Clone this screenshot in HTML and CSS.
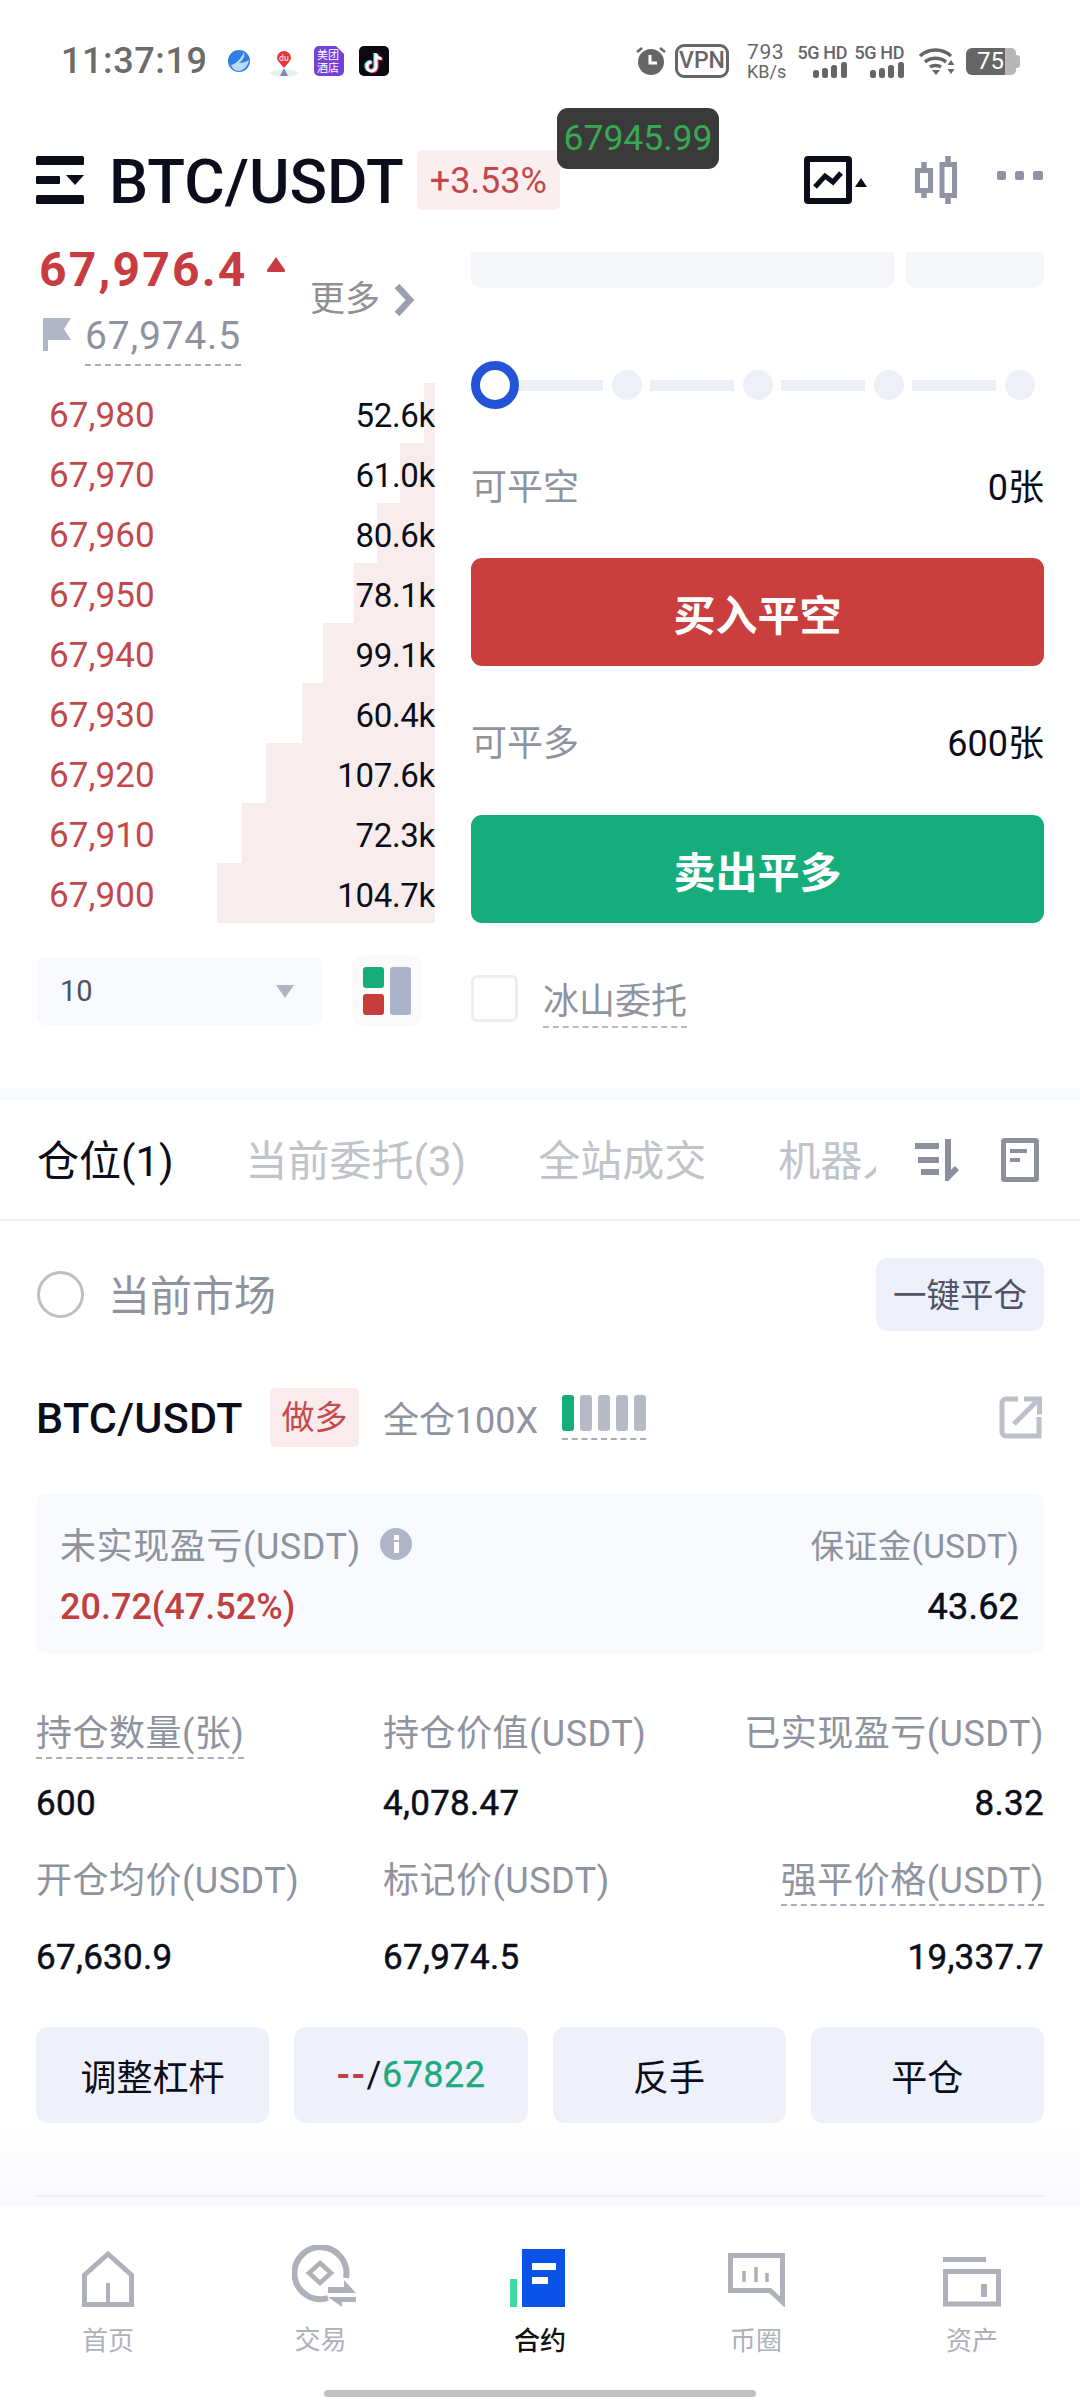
FILE: index.html
```html
<!DOCTYPE html>
<html lang="zh-CN">
<head>
<meta charset="utf-8">
<title>BTC/USDT</title>
<link rel="stylesheet" href="styles.css">
</head>
<body>
<div class="page">
  <div class="status">
    <span class="time">11:37:19</span>
    <svg class="st-globe" width="22" height="22" viewBox="0 0 22 22"><circle cx="11" cy="11" r="11" fill="#2f7fe6"/><path d="M3 15C8 14 13 9 16 2c1 5-1 8-5 11 4 0 7-1 10-3-1 6-5 10-10 11-4 0-7-3-8-6z" fill="#bcdcff"/></svg>
    <svg class="st-map" width="28" height="26" viewBox="0 0 28 26"><ellipse cx="14" cy="22" rx="14" ry="3.5" fill="#e6f2e4"/><path d="M14 17C9 11 7 9 7 7a7 7 0 0 1 14 0c0 2-2 4-7 10z" fill="#e8353b"/><path d="M10 25l4-8 4 8z" fill="#7d88c9"/><text class="svg-text" x="14" y="9.500" font-size="8" fill="#fff" text-anchor="middle">du</text></svg>
    <svg class="st-hotel" width="30" height="30" viewBox="0 0 30 30"><path d="M5 0h17l8 8v17a5 5 0 0 1-5 5H5a5 5 0 0 1-5-5V5a5 5 0 0 1 5-5z" fill="#7440d8"/><text class="svg-text" x="14" y="13" font-size="11" fill="#fff" text-anchor="middle">美团</text><text class="svg-text" x="14" y="26" font-size="11" fill="#fff" text-anchor="middle">酒店</text></svg>
    <svg class="st-tiktok" width="30" height="30" viewBox="0 0 30 30"><rect width="30" height="30" rx="5" fill="#0a0a10"/><path d="M16 7v13a4.500 4.500 0 1 1-4.500-4.500M16 7c0 3 2.500 5 5.500 5" fill="none" stroke="#45e0e6" stroke-width="3.400"/><path d="M18 8v13a4.500 4.500 0 1 1-4.500-4.500M18 8c0 3 2.500 5 5.500 5" fill="none" stroke="#f2386a" stroke-width="3.400"/><path d="M17 7.500v13a4.500 4.500 0 1 1-4.500-4.500M17 7.500c0 3 2.500 5 5.500 5" fill="none" stroke="#fff" stroke-width="3"/></svg>
    <svg class="st-alarm" width="30" height="28" viewBox="0 0 30 28"><circle cx="15" cy="15" r="13" fill="#666"/><path d="M14 8v8h7" fill="none" stroke="#fff" stroke-width="3"/><path d="M1 5l5-4M29 5l-5-4" stroke="#666" stroke-width="2.500"/></svg>
    <span class="st-vpn">VPN</span>
    <span class="st-speed"><b>793</b><i>KB/s</i></span>
    <span class="st-sig">
      <span class="sig-label">5G HD</span>
      <svg width="34" height="16" viewBox="0 0 34 16"><rect x="0" y="8" width="6" height="8" rx="2.500"/><rect x="9" y="6" width="6" height="10" rx="2.500"/><rect x="18" y="3" width="6" height="13" rx="2.500"/><rect x="28" y="0" width="6" height="16" rx="2.500"/></svg>
    </span>
    <span class="st-sig st-sig-b">
      <span class="sig-label">5G HD</span>
      <svg width="34" height="16" viewBox="0 0 34 16"><rect x="0" y="8" width="6" height="8" rx="2.500"/><rect x="9" y="6" width="6" height="10" rx="2.500"/><rect x="18" y="3" width="6" height="13" rx="2.500"/><rect x="28" y="0" width="6" height="16" rx="2.500"/></svg>
    </span>
    <svg class="st-wifi" width="37" height="28" viewBox="0 0 37 28"><path d="M2 9c9-8 22-8 31 0M7 15c6-5 15-5 21 0M12 20c3-2 8-2 11 0" fill="none" stroke="#666" stroke-width="3.600"/><path d="M14 23h8l-4 5z" fill="#666"/><path d="M33 13l3.500 5h-7zM33 27l3.500-5h-7z" fill="#666"/></svg>
    <span class="st-batt"><span class="batt-fill">75</span><span class="batt-rest"></span><span class="batt-nub"></span></span>
  </div>

  <div class="tooltip">67945.99</div>

  <header class="head">
    <svg class="menu-icon" width="48" height="48" viewBox="0 0 48 48"><rect width="48" height="9" rx="1.500"/><rect y="20" width="24" height="8" rx="1"/><path d="M30 19h18l-9 10z"/><rect y="39" width="48" height="9" rx="1.500"/></svg>
    <h1 class="title">BTC/USDT</h1>
    <span class="change">+3.53%</span>
    <svg class="chart-icon" width="69" height="48" viewBox="0 0 69 48"><rect x="3" y="3" width="42" height="42" rx="1" fill="none" stroke="#0b0e1a" stroke-width="6"/><path d="M11 31l10-11 8 6 8-9" fill="none" stroke="#0b0e1a" stroke-width="5"/><path d="M57 22l6 9H51z" fill="#0b0e1a"/></svg>
    <svg class="candle-icon" width="42" height="48" viewBox="0 0 42 48"><path d="M9 6v36M33 0v48" stroke="#8f94a3" stroke-width="5.500"/><rect x="2.500" y="14.500" width="13" height="20" fill="#fff" stroke="#8f94a3" stroke-width="5"/><rect x="27" y="8.500" width="12.500" height="31" fill="#fff" stroke="#8f94a3" stroke-width="5"/></svg>
    <svg class="dots-icon" width="46" height="9" viewBox="0 0 46 9"><rect width="9" height="9" rx="2"/><rect x="18" width="9" height="9" rx="2"/><rect x="36" width="10" height="9" rx="2"/></svg>
  </header>

  <section class="trade">
    <div class="left">
      <div class="ticker">
        <div class="ticker-main">
          <div class="last">
            <span class="last-price">67,976.4</span>
            <svg class="last-arrow" width="18" height="15" viewBox="0 0 18 15"><path d="M9 0l9 13a1.500 1.500 0 0 1-1 2H1a1.500 1.500 0 0 1-1-2z"/></svg>
          </div>
          <div class="mark">
            <svg class="flag" width="28" height="33" viewBox="0 0 28 33"><path d="M0 0h28l-7 11 7 11H5v11H0z"/></svg>
            <span class="mark-price">67,974.5</span>
          </div>
        </div>
        <div class="more">
          <span>更多</span>
          <svg width="20" height="32" viewBox="0 0 20 32"><path d="M3 2l13 14L3 30" fill="none" stroke="#9aa0ad" stroke-width="6.500"/></svg>
        </div>
      </div>
      <div class="book">
        <div class="row"><span class="bar" style="width:11px"></span><span class="px">67,980</span><span class="qty">52.6k</span></div>
        <div class="row"><span class="bar" style="width:35px"></span><span class="px">67,970</span><span class="qty">61.0k</span></div>
        <div class="row"><span class="bar" style="width:58px"></span><span class="px">67,960</span><span class="qty">80.6k</span></div>
        <div class="row"><span class="bar" style="width:81px"></span><span class="px">67,950</span><span class="qty">78.1k</span></div>
        <div class="row"><span class="bar" style="width:112px"></span><span class="px">67,940</span><span class="qty">99.1k</span></div>
        <div class="row"><span class="bar" style="width:133px"></span><span class="px">67,930</span><span class="qty">60.4k</span></div>
        <div class="row"><span class="bar" style="width:169px"></span><span class="px">67,920</span><span class="qty">107.6k</span></div>
        <div class="row"><span class="bar" style="width:193px"></span><span class="px">67,910</span><span class="qty">72.3k</span></div>
        <div class="row"><span class="bar" style="width:218px"></span><span class="px">67,900</span><span class="qty">104.7k</span></div>
      </div>
      <div class="depth-row">
        <div class="select"><span>10</span><svg width="18" height="13" viewBox="0 0 18 13"><path d="M0 0h18l-9 13z"/></svg></div>
        <div class="layout-btn">
          <svg width="48" height="48" viewBox="0 0 48 48"><rect width="21" height="21" rx="3" fill="#16ad7a"/><rect y="27" width="21" height="21" rx="3" fill="#c93c3c"/><rect x="27" width="21" height="48" rx="3" fill="#aab3c9"/></svg>
        </div>
      </div>
    </div>

    <div class="right">
      <div class="inputs"><span class="input-a"></span><span class="input-b"></span></div>
      <div class="slider">
        <span class="thumb"></span>
        <span class="track"></span><span class="dot"></span>
        <span class="track"></span><span class="dot"></span>
        <span class="track"></span><span class="dot"></span>
        <span class="track"></span><span class="dot"></span>
      </div>
      <div class="avail avail-a"><span class="avail-label">可平空</span><span class="avail-val">0张</span></div>
      <button class="cta cta-buy">买入平空</button>
      <div class="avail avail-b"><span class="avail-label">可平多</span><span class="avail-val">600张</span></div>
      <button class="cta cta-sell">卖出平多</button>
      <div class="iceberg"><span class="check"></span><span class="iceberg-label">冰山委托</span></div>
    </div>
  </section>

  <div class="band"></div>

  <nav class="tabs">
    <div class="tab-list">
      <span class="tab tab-on">仓位(1)</span>
      <span class="tab">当前委托(3)</span>
      <span class="tab">全站成交</span>
      <span class="tab">机器人</span>
    </div>
    <svg class="sort-icon" width="45" height="42" viewBox="0 0 45 42"><rect y="4" width="24" height="6"/><rect x="3" y="18" width="21" height="6"/><rect x="6" y="30" width="18" height="6"/><path d="M33 0v38l9-9" fill="none" stroke="#8c909c" stroke-width="6"/></svg>
    <svg class="note-icon" width="38" height="44" viewBox="0 0 38 44"><rect x="2.500" y="2.500" width="33" height="39" rx="1" fill="none" stroke="#8c909c" stroke-width="5"/><rect x="9" y="11" width="17" height="4" fill="#8c909c"/><rect x="9" y="20" width="10" height="4" fill="#8c909c"/></svg>
  </nav>

  <main class="position">
    <div class="market">
      <span class="market-left"><span class="radio"></span><span class="market-label">当前市场</span></span>
      <span class="close-all">一键平仓</span>
    </div>

    <div class="pos-head">
      <span class="pos-name">BTC/USDT</span>
      <span class="pos-side">做多</span>
      <span class="pos-mode">全仓100X</span>
      <span class="risk"><i class="risk-on"></i><i></i><i></i><i></i><i></i></span>
      <svg class="share" width="43" height="43" viewBox="0 0 43 43"><path d="M19 3H7a4 4 0 0 0-4 4v29a4 4 0 0 0 4 4h33V21" fill="none" stroke="#bcc0ca" stroke-width="5"/><path d="M15 28L38 5M25 3h15.500v15.500" fill="none" stroke="#bcc0ca" stroke-width="5"/></svg>
    </div>

    <div class="pnl">
      <div class="pnl-col">
        <div class="pnl-label">未实现盈亏(USDT)<svg class="info" width="32" height="32" viewBox="0 0 32 32"><circle cx="16" cy="16" r="16" fill="#b0b6c8"/><rect x="14" y="14" width="5" height="11" fill="#fff"/><rect x="14" y="7" width="5" height="5" fill="#fff"/></svg></div>
        <div class="pnl-val pnl-red">20.72(47.52%)</div>
      </div>
      <div class="pnl-col pnl-end">
        <div class="pnl-label">保证金(USDT)</div>
        <div class="pnl-val">43.62</div>
      </div>
    </div>

    <div class="stats">
      <div class="stat"><span class="stat-label dashed">持仓数量(张)</span><span class="stat-val">600</span></div>
      <div class="stat"><span class="stat-label">持仓价值(USDT)</span><span class="stat-val">4,078.47</span></div>
      <div class="stat stat-end"><span class="stat-label">已实现盈亏(USDT)</span><span class="stat-val">8.32</span></div>
    </div>
    <div class="stats stats-b">
      <div class="stat"><span class="stat-label">开仓均价(USDT)</span><span class="stat-val">67,630.9</span></div>
      <div class="stat"><span class="stat-label">标记价(USDT)</span><span class="stat-val">67,974.5</span></div>
      <div class="stat stat-end"><span class="stat-label dashed">强平价格(USDT)</span><span class="stat-val">19,337.7</span></div>
    </div>

    <div class="actions">
      <button class="act">调整杠杆</button>
      <button class="act act-tp"><span class="act-red">--</span>/<span class="act-green">67822</span></button>
      <button class="act">反手</button>
      <button class="act">平仓</button>
    </div>
  </main>

  <div class="fade"><div class="fade-line"></div></div>

  <footer class="nav">
    <div class="nav-items">
      <div class="nav-item">
        <svg width="52" height="57" viewBox="0 0 52 57" fill="none" stroke="#aeb1ba" stroke-width="5"><path d="M2.500 54.500V25L26 4l23.500 21v29.500z"/><path d="M26 33v21" stroke-width="4"/></svg>
        <span class="nav-label">首页</span>
      </div>
      <div class="nav-item">
        <svg width="64" height="62" viewBox="0 0 64 62" fill="none" stroke="#aeb1ba"><path d="M54 33A26 26 0 1 0 36 53" stroke-width="6"/><path d="M28 18l11 10-11 10-11-10z" stroke-width="4.500"/><path d="M36 48V42H52V35L64 48z" fill="#aeb1ba" stroke="none"/><path d="M64 52v5H50v5L36 52z" fill="#aeb1ba" stroke="none"/></svg>
        <span class="nav-label nav-label-shift">交易</span>
      </div>
      <div class="nav-item">
        <svg class="contract-icon" width="55" height="58" viewBox="0 0 55 58"><rect x="0" y="30" width="7" height="28" fill="#3ddc9e"/><rect x="12" width="43" height="58" fill="#0a52e8"/><rect x="22" y="14" width="24" height="7" fill="#fff"/><rect x="22" y="28" width="16" height="7" fill="#fff"/></svg>
        <span class="nav-label nav-label-on">合约</span>
      </div>
      <div class="nav-item">
        <svg width="57" height="54" viewBox="0 0 57 54" fill="none" stroke="#aeb1ba"><path d="M2.500 2.500h52V49L42 37.500H2.500z" stroke-width="5"/><path d="M16 18v11M28 14v15M39 20v9" stroke-width="3.500"/></svg>
        <span class="nav-label">币圈</span>
      </div>
      <div class="nav-item">
        <svg width="58" height="50" viewBox="0 0 58 50" fill="none" stroke="#aeb1ba"><path d="M0 2.500h43" stroke-width="5"/><path d="M2.500 14.500h53v32.500h-53z" stroke-width="5"/><path d="M41 27v13" stroke-width="6"/></svg>
        <span class="nav-label">资产</span>
      </div>
    </div>
    <div class="home-bar"></div>
  </footer>
</div>
</body>
</html>
```

FILE: styles.css
```css
* { box-sizing: border-box; margin: 0; padding: 0; }
html, body { background: #fff; }
body {
  width: 1080px;
  height: 2400px;
  overflow: hidden;
  font-family: Roboto, "Noto Sans CJK SC", sans-serif;
  color: #0b0e1a;
}
button { font-family: inherit; border: 0; cursor: pointer; }
svg { display: block; flex: none; }
.svg-text { font-family: "Noto Sans CJK SC", Roboto, sans-serif; }
.page { position: relative; width: 1080px; height: 2400px; }

/* status bar */
.status { height: 100px; padding: 43px 60px 21px 61px; display: flex; align-items: center; color: #666; }
.time { font-size: 36px; font-weight: 500; letter-spacing: .6px; line-height: 36px; color: #6b6b6b; }
.st-globe { margin-left: 20px; }
.st-map { margin-left: 20px; margin-top: 5px; }
.st-hotel { margin-left: 16px; }
.st-tiktok { margin-left: 15px; }
.st-alarm { margin-left: auto; }
.st-vpn { margin-left: 9px; width: 54px; height: 34px; border: 3px solid #666; border-radius: 9px; font-size: 23px; font-weight: 500; line-height: 28px; text-align: center; }
.st-speed { margin-left: 18px; width: 37px; display: flex; flex-direction: column; align-items: flex-start; }
.st-speed b { font-size: 21px; font-weight: 400; line-height: 18px; letter-spacing: .6px; }
.st-speed i { font-size: 18px; font-style: normal; line-height: 17px; margin-top: 2px; }
.st-sig { margin-left: 15px; width: 48px; display: flex; flex-direction: column; align-items: flex-end; fill: #666; }
.st-sig-b { margin-left: 9px; }
.sig-label { font-size: 18px; font-weight: 500; line-height: 17px; letter-spacing: -.4px; white-space: nowrap; margin-bottom: 1px; }
.st-wifi { margin-left: 14px; }
.st-batt { margin-left: 11px; width: 54px; height: 27px; display: flex; }
.batt-fill { width: 39px; background: #666; border-radius: 6px 0 0 6px; color: #fff; font-size: 24px; line-height: 27px; text-align: right; padding-right: 1px; }
.batt-rest { width: 11px; background: #b6b6b6; border-radius: 0 5px 5px 0; }
.batt-nub { width: 4px; height: 13px; align-self: center; background: #b6b6b6; border-radius: 0 3px 3px 0; }

/* floating price */
.tooltip { position: absolute; left: 557px; top: 108px; width: 162px; height: 61px; background: #3a3a3a; border-radius: 11px; color: #39a854; font-size: 35.500px; line-height: 61px; text-align: center; z-index: 3; }

/* header */
.head { height: 152px; padding: 50px 37px 0 36px; display: flex; align-items: flex-start; }
.menu-icon { margin-top: 6px; fill: #0b0e1a; }
.title { margin: 2px 0 0 25px; font-size: 62px; font-weight: 500; line-height: 60px; white-space: nowrap; }
.change { margin-left: 13px; width: 143px; height: 60px; background: #fbeeee; border-radius: 5px; color: #c4474c; font-size: 36px; line-height: 62px; text-align: center; }
.chart-icon { margin-left: auto; margin-top: 6px; }
.candle-icon { margin-left: 42px; margin-top: 6px; }
.dots-icon { margin-left: 40px; margin-top: 21px; fill: #8f94a3; }

/* trade panel */
.trade { height: 836px; padding: 0 36px; display: flex; gap: 36px; overflow: hidden; }
.left { width: 399px; flex: none; }
.right { flex: 1; min-width: 0; }

.ticker { height: 131px; display: flex; }
.ticker-main { width: 274px; flex: none; }
.last { display: flex; align-items: flex-start; margin: -6px 0 0 3px; }
.last-price { font-size: 48px; font-weight: 700; line-height: 48px; letter-spacing: 2.200px; color: #c73c40; }
.last-arrow { margin: 11px 0 0 19px; fill: #c73c40; }
.mark { display: flex; align-items: flex-start; margin: 21px 0 0 7px; }
.flag { margin-top: 3px; fill: #b0b6c5; }
.mark-price { margin-left: 14px; margin-top: 1px; padding-bottom: 8px; border-bottom: 2px dashed #a9adb7; font-size: 39px; line-height: 40px; letter-spacing: .8px; color: #8e939f; }
.more { height: 40px; margin-top: 28px; display: flex; align-items: center; gap: 14px; font-size: 35px; line-height: 40px; color: #8f8f94; }

.row { position: relative; height: 60px; padding: 6px 0 0 13px; display: flex; align-items: center; justify-content: space-between; }
.bar { position: absolute; top: 0; right: 0; bottom: 0; background: #f8ecec; }
.px { position: relative; font-size: 35px; line-height: 40px; letter-spacing: .1px; color: #c4474c; }
.qty { position: relative; font-size: 33px; line-height: 40px; letter-spacing: -.3px; }

.depth-row { margin-top: 32px; padding-left: 1px; display: flex; align-items: center; gap: 30px; }
.select { width: 285px; height: 68px; padding: 0 28px 0 23px; background: #f8f9fc; border-radius: 8px; display: flex; align-items: center; justify-content: space-between; font-size: 29px; color: #4c5260; fill: #b0b4c0; }
.layout-btn { width: 70px; height: 72px; background: #fafafb; border-radius: 12px; display: flex; align-items: center; justify-content: center; }

.inputs { height: 36px; display: flex; gap: 12px; }
.input-a, .input-b { background: #f5f6fa; border-radius: 0 0 10px 10px; }
.input-a { width: 423px; }
.input-b { flex: 1; }

.slider { height: 48px; margin-top: 73px; display: flex; align-items: center; gap: 8.500px; }
.thumb { width: 48px; height: 48px; margin-right: -8.500px; border: 9px solid #2354d8; border-radius: 50%; background: #fff; flex: none; }
.track { width: 84px; height: 11px; background: #eef0f7; flex: none; }
.dot { width: 30px; height: 30px; background: #eef0f7; border-radius: 50%; flex: none; }

.avail { height: 40px; display: flex; align-items: center; justify-content: space-between; font-size: 36px; line-height: 40px; }
.avail-a { margin-top: 59px; }
.avail-b { margin-top: 58px; }
.avail-label { color: #8e939f; }
.cta { display: block; width: 100%; height: 108px; border-radius: 11px; color: #fff; font-size: 42px; font-weight: 700; }
.cta-buy { margin-top: 50px; background: #cb3e3e; }
.cta-sell { margin-top: 51px; background: #15ad7b; }
.iceberg { margin-top: 52px; display: flex; align-items: flex-start; }
.check { width: 47px; height: 47px; border: 3px solid #eceef2; border-radius: 6px; flex: none; }
.iceberg-label { margin-left: 25px; margin-top: 5px; padding-bottom: 2px; border-bottom: 2px dashed #b4b8c2; font-size: 36px; line-height: 44px; color: #8e939f; }

.band { height: 12px; background: #f8f9fb; }

/* tabs */
.tabs { height: 121px; padding: 5px 0 0 37px; border-bottom: 2px solid #eff0f3; display: flex; align-items: center; }
.tab-list { width: 839px; flex: none; overflow: hidden; display: flex; gap: 72px; white-space: nowrap; }
.tab { flex: none; font-size: 42px; line-height: 50px; color: #c0c3c9; }
.tab-on { color: #0b0e1a; }
.sort-icon { margin: -5px 0 0 39px; fill: #8c909c; }
.note-icon { margin: -5px 0 0 41px; }

/* position */
.position { padding: 0 36px; }
.market { height: 73px; margin-top: 37px; display: flex; align-items: center; justify-content: space-between; }
.market-left { display: flex; align-items: center; }
.radio { width: 47px; height: 47px; margin-left: 1px; border: 3px solid #bdbfc5; border-radius: 50%; }
.market-label { margin: 5px 0 0 24px; font-size: 42px; line-height: 50px; color: #8e939f; }
.close-all { width: 168px; height: 73px; background: #eef0f9; border-radius: 12px; font-size: 33.500px; line-height: 76px; text-align: center; color: #4f5564; }

.pos-head { height: 59px; margin-top: 57px; display: flex; align-items: center; }
.pos-name { font-size: 43px; font-weight: 500; letter-spacing: .3px; line-height: 50px; }
.pos-side { margin-left: 27px; width: 89px; height: 59px; background: #faecec; border-radius: 5px; color: #c8494c; font-size: 33px; line-height: 60px; text-align: center; }
.pos-mode { margin: 6px 0 0 24px; font-size: 36px; line-height: 50px; color: #8e939f; }
.risk { margin-left: 24px; padding-bottom: 7px; border-bottom: 2px dashed #a9adb7; display: flex; gap: 6px; }
.risk i { width: 12px; height: 36px; background: #b5bac6; border-radius: 3px; }
.risk .risk-on { background: #15ad7b; }
.share { margin-left: auto; margin-right: 2px; margin-top: -1px; }

.pnl { height: 160px; margin-top: 46px; padding: 32px 25px 0 24px; background: #f9fafd; border-radius: 8px; display: flex; justify-content: space-between; }
.pnl-end { text-align: right; }
.pnl-label { display: flex; align-items: center; font-size: 36px; line-height: 44px; letter-spacing: .6px; color: #8e939f; white-space: nowrap; }
.pnl-end .pnl-label { font-size: 33.500px; letter-spacing: .2px; }
.info { margin: -6px 0 0 19px; }
.pnl-val { margin-top: 16px; font-size: 36px; line-height: 44px; letter-spacing: .2px; -webkit-text-stroke: .5px #0b0e1a; }
.pnl-red { font-weight: 500; letter-spacing: 0; -webkit-text-stroke: 0; color: #c0403f; }

.stats { margin-top: 59px; display: grid; grid-template-columns: 347px 1fr auto; }
.stats-b { margin-top: 33px; }
.stat { display: flex; flex-direction: column; align-items: flex-start; }
.stat-end { align-items: flex-end; }
.stat-label { padding-bottom: 1px; border-bottom: 2px dashed transparent; font-size: 36px; line-height: 44px; letter-spacing: .5px; color: #8e939f; white-space: nowrap; }
.stat-label.dashed { border-bottom-color: #a9adb7; }
.stat-val { margin-top: 23px; font-size: 35px; line-height: 44px; letter-spacing: .3px; -webkit-text-stroke: .5px #0b0e1a; }
.stats-b .stat-val { margin-top: 30px; }

.actions { margin-top: 47px; display: grid; grid-template-columns: repeat(4, 1fr); gap: 25px; }
.act { height: 96px; background: #eef1f9; border-radius: 12px; color: #0b0e1a; font-size: 36px; }
.act-tp { letter-spacing: .5px; }
.act-red { color: #c0404a; font-weight: 700; letter-spacing: 1px; }
.act-green { color: #1eaa80; -webkit-text-stroke: .3px #1eaa80; }

.fade { height: 82px; padding: 72px 36px 0; background: linear-gradient(#fff, #f8f9fc); }
.fade-line { height: 2px; background: #eeeff3; }

/* bottom nav */
.nav { height: 195px; }
.nav-items { height: 151px; padding-top: 40px; display: grid; grid-template-columns: repeat(5, 1fr); }
.nav-item { height: 111px; display: flex; flex-direction: column; align-items: center; justify-content: flex-end; }
.contract-icon { margin-right: 5px; }
.nav-label { margin-top: 19px; font-size: 26px; line-height: 30px; color: #aeb1ba; }
.nav-label-shift { margin: 18px 7px 1px 0; }
.nav-label-on { color: #111; font-weight: 500; }
.home-bar { width: 432px; height: 7px; margin: 34px auto 0; background: #c0c0c0; border-radius: 4px; }
```
